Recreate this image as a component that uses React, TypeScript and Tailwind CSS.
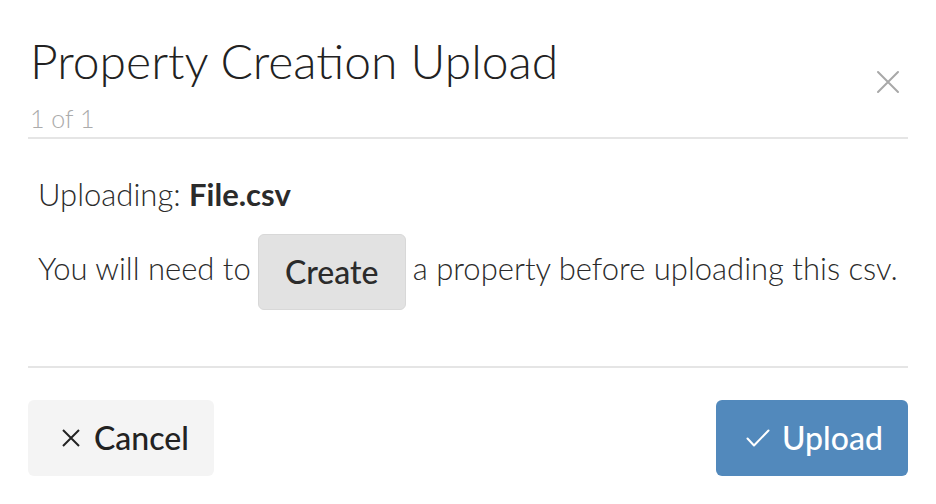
import React from 'react';

const App: React.FC = () => {
  return (
    <div className="w-[936px] h-[504px] bg-white px-[28px] font-['Lato','Liberation_Sans',sans-serif] text-[#2b2b2b]">
      <header className="flex items-start justify-between">
        <div className="pl-[2px] pt-[33px]">
          <h1 className="text-[48px] leading-[56px] font-light text-[#222]">Property Creation Upload</h1>
          <p className="text-[25px] leading-[30px] font-light text-[#ababab] mt-[14px]">1 of 1</p>
        </div>
        <button className="mt-[70px] mr-[8px] text-[#a8a8a8]" aria-label="Close">
          <svg width="24" height="24" viewBox="0 0 24 24" fill="none" stroke="currentColor" strokeWidth="2" strokeLinecap="round">
            <path d="M2 2 L22 22 M22 2 L2 22" />
          </svg>
        </button>
      </header>
      <div className="h-[2px] bg-[#e5e5e5] mt-[4px]" />

      <section className="pl-[10px] pt-[37px] text-[31px] font-light">
        <p className="leading-[36px]">
          Uploading: <span className="font-bold">File.csv</span>
        </p>
        <div className="flex items-start mt-[22px] leading-[36px]">
          <span className="mt-[16px]">You will need to</span>
          <button className="mx-[7px] w-[148px] h-[76px] rounded-[6px] bg-[#e2e2e2] border border-[#d8d8d8] text-[32px] font-medium text-[#2b2b2b]">
            Create
          </button>
          <span className="mt-[16px]">a property before uploading this csv.</span>
        </div>
      </section>

      <div className="h-[2px] bg-[#e5e5e5] mt-[56px]" />

      <footer className="flex justify-between mt-[32px]">
        <button className="flex items-center gap-[14px] w-[186px] h-[76px] pl-[34px] rounded-[6px] bg-[#f4f4f4] text-[32px] font-medium text-[#222]">
          <svg width="18" height="18" viewBox="0 0 18 18" fill="none" stroke="currentColor" strokeWidth="2">
            <path d="M1 1 L17 17 M17 1 L1 17" />
          </svg>
          Cancel
        </button>
        <button className="flex items-center gap-[12px] w-[192px] h-[76px] pl-[30px] rounded-[6px] bg-[#5289bc] text-[32px] font-medium text-white">
          <svg width="24" height="18" viewBox="0 0 24 18" fill="none" stroke="currentColor" strokeWidth="2" strokeLinecap="round" strokeLinejoin="round">
            <path d="M1.5 9.5 L8 16.5 L22.5 1.5" />
          </svg>
          Upload
        </button>
      </footer>
    </div>
  );
};

export default App;
